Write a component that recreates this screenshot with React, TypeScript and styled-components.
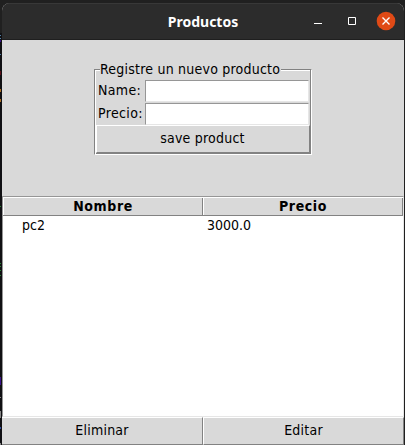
import React from "react";
import styled, { createGlobalStyle } from "styled-components";

const GlobalStyle = createGlobalStyle`
  * { box-sizing: border-box; }
  body { margin: 0; background: #1c1c1c; overflow: hidden; }
`;

const Desktop = styled.div`
  display: flex;
  width: 405px;
  height: 445px;
  padding-top: 3px;
  background: #202020;
  font: 14px/18px "DejaVu Sans Condensed", "DejaVu Sans", sans-serif;
  font-stretch: condensed;
  color: #000;
`;

const Backdrop = styled.svg`
  flex: none;
  width: 2px;
  height: 442px;
`;

const Window = styled.main`
  display: flex;
  flex-direction: column;
  width: 402px;
  height: 442px;
  background: #d9d9d9;
  border-radius: 8px 8px 0 0;
  overflow: hidden;
`;

const TitleBar = styled.header`
  display: grid;
  grid-template-columns: 1fr auto 1fr;
  align-items: center;
  flex: none;
  height: 37px;
  background: #2c2c2c;
  border-top: 1px solid #383838;
  border-bottom: 1px solid #1f1f1f;
`;

const Title = styled.h1`
  grid-column: 2;
  margin: 0;
  color: #fff;
  font: bold 14px/18px "Noto Sans", sans-serif;
`;

const Controls = styled.svg`
  justify-self: end;
  width: 98px;
  height: 35px;
`;

const FormArea = styled.section`
  flex: none;
  height: 156px;
  padding: 21px 0 0 92px;
`;

const Group = styled.fieldset`
  display: flex;
  flex-direction: column;
  width: 218px;
  height: 94px;
  min-width: 0;
  margin: 0;
  padding: 0;
  border: 0;
  letter-spacing: 0.22px;
`;

const GroupHead = styled.div`
  display: flex;
  flex: none;
  height: 17px;
`;

const Corner = styled.span<{ $end?: boolean }>`
  flex: ${(p) => (p.$end ? 1 : "0 0 6px")};
  height: 9px;
  margin-top: 8px;
  border-top: 1px solid #828282;
  ${(p) => (p.$end ? "border-right: 1px solid #fff;" : "border-left: 1px solid #828282;")}
  box-shadow: inset ${(p) => (p.$end ? "-1px 0 #828282, inset 0 1px #fff" : "1px 1px #fff")};
`;

const GroupLabel = styled.span`
  width: 181px;
  line-height: 16px;
  white-space: nowrap;
`;

const GroupBody = styled.div`
  flex: none;
  height: 77px;
  padding: 2px 1px 0;
  border: solid;
  border-width: 0 1px 1px;
  border-color: #fff #fff #fff #828282;
  box-shadow: inset 1px 0 #fff, inset -1px 0 #828282, inset 0 -1px #828282;
`;

const Field = styled.label`
  display: flex;
  height: 23px;
  padding: 0 1px 0 2px;
  line-height: 21px;
`;

const FieldName = styled.span`
  width: 47px;
  flex: none;
  white-space: nowrap;
  letter-spacing: 0.35px;
`;

const Entry = styled.input`
  flex: 1;
  min-width: 0;
  height: 22px;
  padding: 0 2px;
  border: 1px solid;
  border-color: #969696 #e6e6e6 #e6e6e6 #969696;
  border-radius: 0;
  outline: 0;
  background: #fff;
  font: inherit;
`;

const Button = styled.button<{ $save?: boolean }>`
  display: block;
  width: 100%;
  height: 28px;
  margin: ${(p) => (p.$save ? "-1px 0 0" : "0")};
  padding: ${(p) => (p.$save ? "0 1px 3px 0" : "0 0 3px")};
  border: solid;
  border-width: ${(p) => (p.$save ? "1px" : "1px 1px 1px 0")};
  border-color: #fff #828282 #828282 #fff;
  border-radius: 0;
  background: #d9d9d9;
  color: #000;
  font: inherit;
  letter-spacing: 0.22px;
`;

const Table = styled.section`
  flex: none;
  height: 221px;
  border: 1px solid;
  border-color: #969696 #e6e6e6 #e6e6e6 #969696;
  background: #fff;
`;

const Row = styled.div`
  display: grid;
  grid-template-columns: 200px 200px;
`;

const Heading = styled.div`
  height: 18px;
  margin-top: 1px;
  padding-left: 1px;
  border-right: 1px solid #828282;
  border-bottom: 1px solid #828282;
  box-shadow: inset 1px 0 #fff;
  background: #d9d9d9;
  text-align: center;
  font-weight: bold;
  line-height: 17px;
  letter-spacing: 0.6px;
`;

const Cell = styled.div<{ $first?: boolean }>`
  padding-left: ${(p) => (p.$first ? "19px" : "4px")};
  line-height: 18px;
`;

const Actions = styled.footer`
  display: grid;
  grid-template-columns: 201px 201px;
  flex: none;
  height: 28px;

  ${Button} + ${Button} { border-left-width: 1px; }
`;

export default function App() {
  return (
    <>
      <GlobalStyle />
      <Desktop>
        <Backdrop viewBox="0 3 2 442" aria-hidden="true">
          <path d="M0 3h2v442H0z" fill="#101013" />
          <path d="M0 3h2v30H0z" fill="#202020" />
          <path d="M0 35h1v1H0zM0 38h1v1H0zM0 54h1v1H0z" fill="#4f7da5" />
          <path d="M0 40h1v2H0zM0 377h1v8H0z" fill="#3b118b" />
          <path d="M0 71h1v4H0z" fill="#5b1019" />
          <path d="M0 89h1v3H0zM0 99h1v3H0z" fill="#ab7027" />
          <path d="M0 206h1v1H0zM0 263h1v1H0zM0 266h1v1H0zM0 270h1v1H0zM0 275h1v1H0z" fill="#258332" />
          <path d="M0 397h1v1H0zM0 411h1v7H0zM0 443h1v2H0z" fill="#858585" />
          <path d="M0 427h1v2H0z" fill="#304ba0" />
        </Backdrop>
        <Window>
          <TitleBar>
            <Title>Productos</Title>
            <Controls viewBox="306 4 98 35" aria-label="Window controls">
              <path d="M314 23h8v1h-8z" fill="#fff" />
              <path d="M348.5 17.5h7v7h-7z" fill="none" stroke="#fff" />
              <circle cx="386" cy="21" r="9.3" fill="#e04a16" />
              <path d="m382.5 17.5 7 7m0-7-7 7" stroke="#fff" strokeWidth="1.4" />
            </Controls>
          </TitleBar>
          <FormArea>
            <Group>
              <GroupHead>
                <Corner />
                <GroupLabel>Registre un nuevo producto</GroupLabel>
                <Corner $end />
              </GroupHead>
              <GroupBody>
                <Field><FieldName>Name:</FieldName><Entry aria-label="Name" /></Field>
                <Field><FieldName>Precio:</FieldName><Entry aria-label="Precio" /></Field>
                <Button $save>save product</Button>
              </GroupBody>
            </Group>
          </FormArea>
          <Table>
            <Row><Heading>Nombre</Heading><Heading>Precio</Heading></Row>
            <Row><Cell $first>pc2</Cell><Cell>3000.0</Cell></Row>
          </Table>
          <Actions><Button>Eliminar</Button><Button>Editar</Button></Actions>
        </Window>
      </Desktop>
    </>
  );
}
